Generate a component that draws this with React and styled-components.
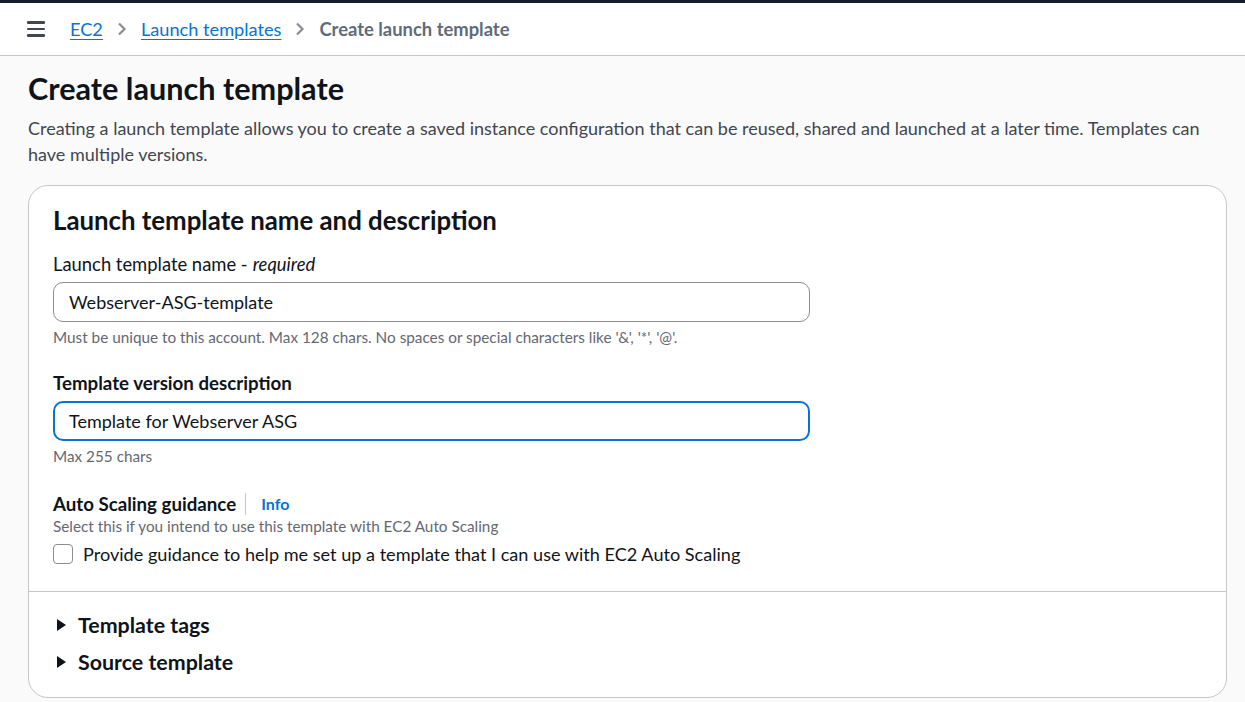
import React from "react";
import styled, { createGlobalStyle } from "styled-components";

const GlobalStyle = createGlobalStyle`
  html, body {
    margin: 0;
    padding: 0;
    background: #fafafa;
    font-family: Lato, "Open Sans", sans-serif;
    color: #0f141a;
  }
  * { box-sizing: border-box; }
`;

const Page = styled.div`
  width: 1245px;
  height: 702px;
  overflow: hidden;
  border-top: 3px solid #161d26;
`;

const TopBar = styled.header`
  height: 53px;
  background: #fff;
  border-bottom: 1px solid #c6c6cd;
  display: flex;
  align-items: center;
  padding: 0 0 0 27px;
`;

const Burger = styled.span`
  display: flex;
  flex-direction: column;
  gap: 4px;
  width: 18px;
  margin-right: 25px;
  span {
    height: 2.5px;
    background: #424650;
    border-radius: 1px;
  }
`;

const Crumbs = styled.nav`
  display: flex;
  align-items: center;
  gap: 14px;
  font-size: 18.2px;
  margin-top: -1px;
`;

const CrumbLink = styled.a`
  color: #0972d3;
  text-decoration: underline;
  text-underline-offset: 3px;
`;

const CrumbCurrent = styled.span`
  color: #5f6b7a;
  font-weight: 700;
  font-size: 18.4px;
`;

const Chevron = () => (
  <svg width="10" height="14" viewBox="0 0 10 14">
    <path d="M2 1.5 L7.5 7 L2 12.5" fill="none" stroke="#8c8c94" strokeWidth="2.2" />
  </svg>
);

const Main = styled.main`
  padding: 15px 19px 0 28px;
`;

const H1 = styled.h1`
  margin: 0;
  font-size: 30.6px;
  font-weight: 700;
  line-height: 36px;
`;

const Lead = styled.p`
  margin: 8px 0 0;
  font-size: 18px;
  line-height: 26px;
  color: #424650;
`;

const Card = styled.section`
  margin-top: 18px;
  width: 1199px;
  background: #fff;
  border: 1px solid #c6c6cd;
  border-radius: 20px;
  overflow: hidden;
`;

const CardBody = styled.div`
  padding: 18px 24px 26px;
`;

const H2 = styled.h2`
  margin: 0 0 16px;
  font-size: 25.8px;
  font-weight: 700;
  line-height: 32px;
`;

const Field = styled.div`
  margin-bottom: ${(p) => p.$gap || 0}px;
`;

const Label = styled.div`
  display: flex;
  align-items: center;
  font-size: ${(p) => (p.$bold ? 18.7 : 18.4)}px;
  line-height: 24px;
  font-weight: ${(p) => (p.$bold ? 700 : 400)};
  margin-bottom: ${(p) => p.$mb ?? 6}px;
  em { margin-left: 5px; }
`;

const Input = styled.div`
  width: 757px;
  height: 40px;
  display: flex;
  align-items: center;
  padding: 0 ${(p) => (p.$focus ? 14 : 15)}px;
  border: ${(p) => (p.$focus ? "2px solid #0972d3" : "1px solid #8c8c94")};
  border-radius: 10px;
  font-size: 18px;
  color: #0f141a;
`;

const Hint = styled.div`
  font-size: 15.3px;
  line-height: 20px;
  color: #656871;
  margin-top: ${(p) => p.$mt ?? 5}px;
`;

const Divider = styled.span`
  width: 1px;
  height: 22px;
  background: #c6c6cd;
  margin: 0 15px 0 9px;
`;

const Info = styled.a`
  color: #0972d3;
  font-weight: 700;
  font-size: 16px;
`;

const CheckRow = styled.label`
  display: flex;
  align-items: center;
  gap: 10px;
  margin-top: 7px;
  font-size: 18.1px;
`;

const Box = styled.span`
  width: 20px;
  height: 20px;
  border: 1.5px solid #8c8c94;
  border-radius: 4px;
  background: #fff;
`;

const Expanders = styled.div`
  border-top: 1px solid #c6c6cd;
  padding: 21px 24px 23px;
  display: flex;
  flex-direction: column;
  gap: 13px;
`;

const Expander = styled.div`
  display: flex;
  align-items: center;
  gap: 12px;
  font-size: 21.4px;
  font-weight: 700;
  line-height: 24px;
  padding-left: 4px;
`;

const Caret = () => (
  <svg width="9" height="12" viewBox="0 0 9 12">
    <path d="M0 0 L9 6 L0 12 Z" fill="#0f141a" />
  </svg>
);

export default function App() {
  return (
    <>
      <GlobalStyle />
      <Page>
        <TopBar>
          <Burger>
            <span />
            <span />
            <span />
          </Burger>
          <Crumbs>
            <CrumbLink>EC2</CrumbLink>
            <Chevron />
            <CrumbLink>Launch templates</CrumbLink>
            <Chevron />
            <CrumbCurrent>Create launch template</CrumbCurrent>
          </Crumbs>
        </TopBar>
        <Main>
          <H1>Create launch template</H1>
          <Lead>
            Creating a launch template allows you to create a saved instance configuration that can be
            reused, shared and launched at a later time. Templates can have multiple versions.
          </Lead>
          <Card>
            <CardBody>
              <H2>Launch template name and description</H2>
              <Field $gap={24}>
                <Label>
                  Launch template name - <em>required</em>
                </Label>
                <Input>Webserver-ASG-template</Input>
                <Hint>Must be unique to this account. Max 128 chars. No spaces or special characters like '&amp;', '*', '@'.</Hint>
              </Field>
              <Field $gap={26}>
                <Label $bold>Template version description</Label>
                <Input $focus>Template for Webserver ASG</Input>
                <Hint>Max 255 chars</Hint>
              </Field>
              <Field>
                <Label $bold $mb={0}>
                  Auto Scaling guidance
                  <Divider />
                  <Info>Info</Info>
                </Label>
                <Hint $mt={0}>Select this if you intend to use this template with EC2 Auto Scaling</Hint>
                <CheckRow>
                  <Box />
                  Provide guidance to help me set up a template that I can use with EC2 Auto Scaling
                </CheckRow>
              </Field>
            </CardBody>
            <Expanders>
              <Expander>
                <Caret />
                Template tags
              </Expander>
              <Expander>
                <Caret />
                Source template
              </Expander>
            </Expanders>
          </Card>
        </Main>
      </Page>
    </>
  );
}
